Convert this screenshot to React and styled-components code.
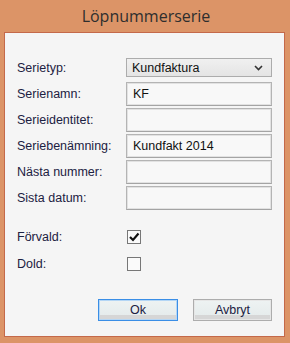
import React from "react";
import styled, { createGlobalStyle } from "styled-components";

const GlobalStyle = createGlobalStyle`
  html, body { margin: 0; padding: 0; }
  body { font-family: "Liberation Sans", Arial, sans-serif; }
`;

const fields = [
  { label: "Serienamn:", value: "KF" },
  { label: "Serieidentitet:", value: "" },
  { label: "Seriebenämning:", value: "Kundfakt 2014" },
  { label: "Nästa nummer:", value: "" },
  { label: "Sista datum:", value: "" },
];

const checks = [
  { label: "Förvald:", checked: true },
  { label: "Dold:", checked: false },
];

const App = () => {
  return (
    <Frame>
      <GlobalStyle />
      <TitleBar>Löpnummerserie</TitleBar>
      <Panel>
        <SelectRow>
          <Label>Serietyp:</Label>
          <Select>
            <span>Kundfaktura</span>
            <svg width="9" height="6" viewBox="0 0 9 6">
              <polyline points="1,1 4.5,4.5 8,1" fill="none" stroke="#333" strokeWidth="1.6" />
            </svg>
          </Select>
        </SelectRow>
        <Fields>
          {fields.map((f, i) => (
            <Row key={i}>
              <Label>{f.label}</Label>
              <Input>{f.value}</Input>
            </Row>
          ))}
        </Fields>
        <Checks>
          {checks.map((c, i) => (
            <CheckRow key={i}>
              <Label>{c.label}</Label>
              <Box>
                {c.checked && (
                  <svg width="12" height="12" viewBox="0 0 12 12">
                    <polyline points="2,6 5,9 10.5,2.5" fill="none" stroke="#111" strokeWidth="2.2" />
                  </svg>
                )}
              </Box>
            </CheckRow>
          ))}
        </Checks>
        <Buttons>
          <Button $primary>Ok</Button>
          <Button>Avbryt</Button>
        </Buttons>
      </Panel>
    </Frame>
  );
};

export default App;

const Frame = styled.div`
  width: 290px;
  height: 343px;
  box-sizing: border-box;
  background: #dc9467;
  padding: 0 5px 6px 4px;
  display: flex;
  flex-direction: column;
`;

const TitleBar = styled.div`
  height: 32px;
  display: flex;
  align-items: center;
  justify-content: center;
  font-family: "Open Sans", sans-serif;
  font-size: 16px;
  color: #2e2e2e;
  padding-left: 3px;
`;

const Panel = styled.div`
  flex: 1;
  background: #f5f5f5;
  border: 1px solid #c4694a;
  padding: 25px 12px 0 12px;
  display: flex;
  flex-direction: column;
`;

const Label = styled.div`
  width: 109px;
  font-size: 12.5px;
  color: #1c2142;
`;

const SelectRow = styled.div`
  display: flex;
  align-items: center;
  height: 19px;
  margin-bottom: 5px;
`;

const Select = styled.div`
  flex: 1;
  height: 19px;
  box-sizing: border-box;
  border: 1px solid #acacac;
  background: linear-gradient(#f0f0f0, #e4e4e4);
  display: flex;
  align-items: center;
  justify-content: space-between;
  padding: 0 8px 0 5px;
  font-size: 12.5px;
  color: #111;
`;

const Fields = styled.div`
  display: flex;
  flex-direction: column;
  gap: 2px;
`;

const Row = styled.div`
  display: flex;
  align-items: center;
  height: 24px;
`;

const Input = styled.div`
  flex: 1;
  height: 24px;
  box-sizing: border-box;
  border: 1px solid #b4b4b4;
  border-bottom-color: #a4a4a4;
  box-shadow: inset 0 0 0 1px #e2e2e2;
  background: #f8f8f8;
  display: flex;
  align-items: center;
  padding-left: 6px;
  font-size: 12.5px;
  color: #111;
`;

const Checks = styled.div`
  display: flex;
  flex-direction: column;
  gap: 7px;
  margin-top: 17px;
`;

const CheckRow = styled.div`
  display: flex;
  align-items: center;
  height: 20px;
`;

const Box = styled.div`
  width: 14px;
  height: 14px;
  box-sizing: border-box;
  border: 1px solid #777;
  background: #fafafa;
  margin-left: 1px;
  display: flex;
  align-items: center;
  justify-content: center;
`;

const Buttons = styled.div`
  display: flex;
  justify-content: flex-end;
  gap: 15px;
  margin-top: 25px;
`;

const Button = styled.div`
  width: ${(p) => (p.$primary ? 80 : 79)}px;
  height: 22px;
  box-sizing: border-box;
  border: 1px solid ${(p) => (p.$primary ? "#3a8ee6" : "#adadad")};
  box-shadow: inset 0 0 0 1px ${(p) => (p.$primary ? "#b4d6f5" : "#e6e6e6")};
  background: linear-gradient(#eef3f3 0%, #e6ecec 75%, #d6d6d6 76%, #d6d6d6 100%);
  display: flex;
  align-items: center;
  justify-content: center;
  font-size: 12.5px;
  color: #1c2142;
`;
